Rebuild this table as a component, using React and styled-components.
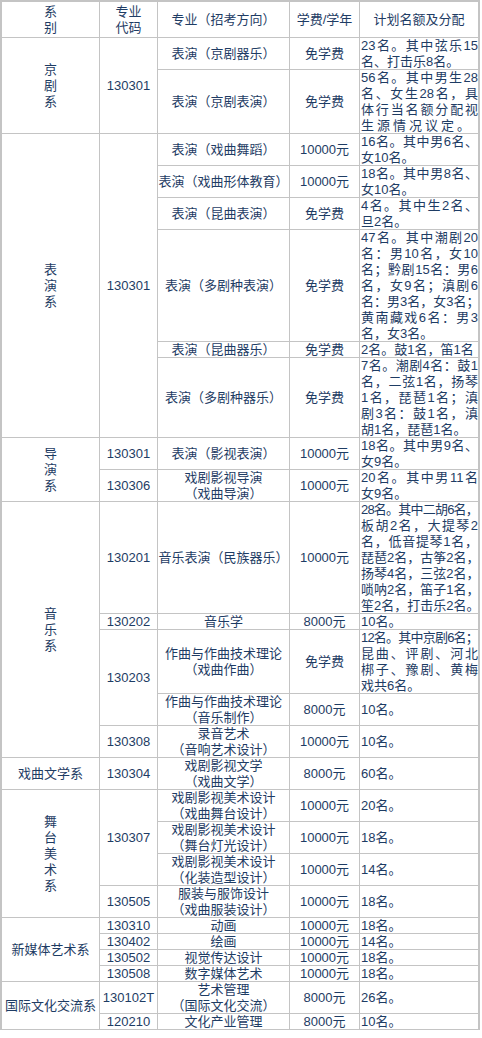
import React from "react";
import styled, { createGlobalStyle, css } from "styled-components";

const GlobalStyle = createGlobalStyle`
  html, body {
    margin: 0;
    padding: 0;
    background: #ffffff;
  }
  body {
    font-family: "Liberation Sans", "Noto Sans CJK SC", sans-serif;
  }
`;

const LINE = 16;
const track = (n) => `${n * LINE - 1}px`;

// 每一行: 行数 / 专业 / 学费 / 名额分配 (spacing: 某一行的字距)
const rows = [
  { n: 2, major: ["表演（京剧器乐）"], fee: "免学费", plan: ["23名。其中弦乐15", "名、打击乐8名。"] },
  {
    n: 4,
    major: ["表演（京剧表演）"],
    fee: "免学费",
    plan: ["56名。其中男生28", "名、女生28名，具", "体行当名额分配视", "生源情况议定。"],
    spacing: { 3: "3px" },
  },
  { n: 2, major: ["表演（戏曲舞蹈）"], fee: "10000元", plan: ["16名。其中男6名、", "女10名。"] },
  { n: 2, major: ["表演（戏曲形体教育）"], fee: "10000元", plan: ["18名。其中男8名、", "女10名。"] },
  { n: 2, major: ["表演（昆曲表演）"], fee: "免学费", plan: ["4名。其中生2名、", "旦2名。"] },
  {
    n: 7,
    major: ["表演（多剧种表演）"],
    fee: "免学费",
    plan: [
      "47名。其中潮剧20",
      "名：男10名，女10",
      "名；黔剧15名：男6",
      "名，女9名；滇剧6",
      "名：男3名，女3名；",
      "黄南藏戏6名：男3",
      "名，女3名。",
    ],
  },
  { n: 1, major: ["表演（昆曲器乐）"], fee: "免学费", plan: ["2名。鼓1名，笛1名"] },
  {
    n: 5,
    major: ["表演（多剧种器乐）"],
    fee: "免学费",
    plan: ["7名。潮剧4名：鼓1", "名，二弦1名，扬琴", "1名，琵琶1名；滇", "剧3名：鼓1名，滇", "胡1名，琵琶1名。"],
  },
  { n: 2, major: ["表演（影视表演）"], fee: "10000元", plan: ["18名。其中男9名、", "女9名。"] },
  { n: 2, major: ["戏剧影视导演", "（戏曲导演）"], fee: "10000元", plan: ["20名。其中男11名", "女9名。"] },
  {
    n: 7,
    major: ["音乐表演（民族器乐）"],
    fee: "10000元",
    plan: [
      "28名。其中二胡6名，",
      "板胡2名，大提琴2",
      "名，低音提琴1名，",
      "琵琶2名，古筝2名，",
      "扬琴4名，三弦2名，",
      "唢呐2名，笛子1名，",
      "笙2名，打击乐2名。",
    ],
    spacing: { 0: "-0.8px" },
  },
  { n: 1, major: ["音乐学"], fee: "8000元", plan: ["10名。"] },
  {
    n: 4,
    major: ["作曲与作曲技术理论", "（戏曲作曲）"],
    fee: "免学费",
    plan: ["12名。其中京剧6名；", "昆曲、评剧、河北", "梆子、豫剧、黄梅", "戏共6名。"],
    spacing: { 0: "-0.8px" },
  },
  { n: 2, major: ["作曲与作曲技术理论", "（音乐制作）"], fee: "8000元", plan: ["10名。"] },
  { n: 2, major: ["录音艺术", "（音响艺术设计）"], fee: "10000元", plan: ["10名。"] },
  { n: 2, major: ["戏剧影视文学", "（戏曲文学）"], fee: "8000元", plan: ["60名。"] },
  { n: 2, major: ["戏剧影视美术设计", "（戏曲舞台设计）"], fee: "10000元", plan: ["20名。"] },
  { n: 2, major: ["戏剧影视美术设计", "（舞台灯光设计）"], fee: "10000元", plan: ["18名。"] },
  { n: 2, major: ["戏剧影视美术设计", "（化装造型设计）"], fee: "10000元", plan: ["14名。"] },
  { n: 2, major: ["服装与服饰设计", "（戏曲服装设计）"], fee: "10000元", plan: ["18名。"] },
  { n: 1, major: ["动画"], fee: "10000元", plan: ["18名。"] },
  { n: 1, major: ["绘画"], fee: "10000元", plan: ["14名。"] },
  { n: 1, major: ["视觉传达设计"], fee: "10000元", plan: ["18名。"] },
  { n: 1, major: ["数字媒体艺术"], fee: "10000元", plan: ["18名。"] },
  { n: 2, major: ["艺术管理", "（国际文化交流）"], fee: "8000元", plan: ["26名。"] },
  { n: 1, major: ["文化产业管理"], fee: "8000元", plan: ["10名。"] },
];

const depts = [
  { name: "京剧系", start: 0, span: 2, vertical: true },
  { name: "表演系", start: 2, span: 6, vertical: true },
  { name: "导演系", start: 8, span: 2, vertical: true },
  { name: "音乐系", start: 10, span: 5, vertical: true },
  { name: "戏曲文学系", start: 15, span: 1 },
  { name: "舞台美术系", start: 16, span: 4, vertical: true },
  { name: "新媒体艺术系", start: 20, span: 4 },
  { name: "国际文化交流系", start: 24, span: 2 },
];

const codes = [
  { code: "130301", start: 0, span: 2 },
  { code: "130301", start: 2, span: 6 },
  { code: "130301", start: 8, span: 1 },
  { code: "130306", start: 9, span: 1 },
  { code: "130201", start: 10, span: 1 },
  { code: "130202", start: 11, span: 1 },
  { code: "130203", start: 12, span: 2 },
  { code: "130308", start: 14, span: 1 },
  { code: "130304", start: 15, span: 1 },
  { code: "130307", start: 16, span: 3 },
  { code: "130505", start: 19, span: 1 },
  { code: "130310", start: 20, span: 1 },
  { code: "130402", start: 21, span: 1 },
  { code: "130502", start: 22, span: 1 },
  { code: "130508", start: 23, span: 1 },
  { code: "130102T", start: 24, span: 1 },
  { code: "120210", start: 25, span: 1 },
];

const headers = [["系", "别"], ["专业", "代码"], ["专业（招考方向）"], ["学费/学年"], ["计划名额及分配"]];

const App = () => {
  const template = ["35px", ...rows.map((r) => track(r.n))].join(" ");

  return (
    <>
      <GlobalStyle />
      <Table $rows={template}>
        {headers.map((lines, i) => (
          <Cell key={`h${i}`} $col={i + 1} $row={1}>
            {lines.map((l) => (
              <Line key={l}>{l}</Line>
            ))}
          </Cell>
        ))}

        {depts.map((d) => (
          <Cell key={d.name} $col={1} $row={d.start + 2} $span={d.span}>
            {d.vertical ? [...d.name].map((ch, i) => <Line key={i}>{ch}</Line>) : <Line>{d.name}</Line>}
          </Cell>
        ))}

        {codes.map((c) => (
          <Cell key={`${c.code}-${c.start}`} $col={2} $row={c.start + 2} $span={c.span}>
            <Line>{c.code}</Line>
          </Cell>
        ))}

        {rows.map((r, i) => (
          <React.Fragment key={i}>
            <Cell $col={3} $row={i + 2}>
              {r.major.map((l) => (
                <Line key={l}>{l}</Line>
              ))}
            </Cell>
            <Cell $col={4} $row={i + 2}>
              <Line>{r.fee}</Line>
            </Cell>
            <Cell $col={5} $row={i + 2} $left>
              {r.plan.map((l, j) => (
                <Line key={j} $fill={j < r.plan.length - 1} $spacing={r.spacing && r.spacing[j]}>
                  {l}
                </Line>
              ))}
            </Cell>
          </React.Fragment>
        ))}
      </Table>
    </>
  );
};

export default App;

const Table = styled.div`
  display: grid;
  grid-template-columns: 97px 57px 131px 69px 118px;
  grid-template-rows: ${(props) => props.$rows};
  gap: 1px;
  width: max-content;
  padding: 2px 2px 1px 2px;
  background: #c4c4c4;
  font-size: 13px;
  line-height: 16px;
  color: #1e3c64;
`;

const Cell = styled.div`
  grid-column: ${(props) => props.$col};
  grid-row: ${(props) => props.$row} / span ${(props) => props.$span || 1};
  background: #ffffff;
  display: flex;
  flex-direction: column;
  justify-content: center;
  align-items: ${(props) => (props.$left ? "stretch" : "center")};
  text-align: ${(props) => (props.$left ? "left" : "center")};
  padding-left: ${(props) => (props.$left ? "1px" : "0")};
  white-space: nowrap;
  min-width: 0;
`;

const Line = styled.div`
  letter-spacing: ${(props) => props.$spacing || "normal"};
  ${(props) =>
    props.$fill &&
    css`
      text-align: justify;
      text-align-last: justify;
    `}
`;
